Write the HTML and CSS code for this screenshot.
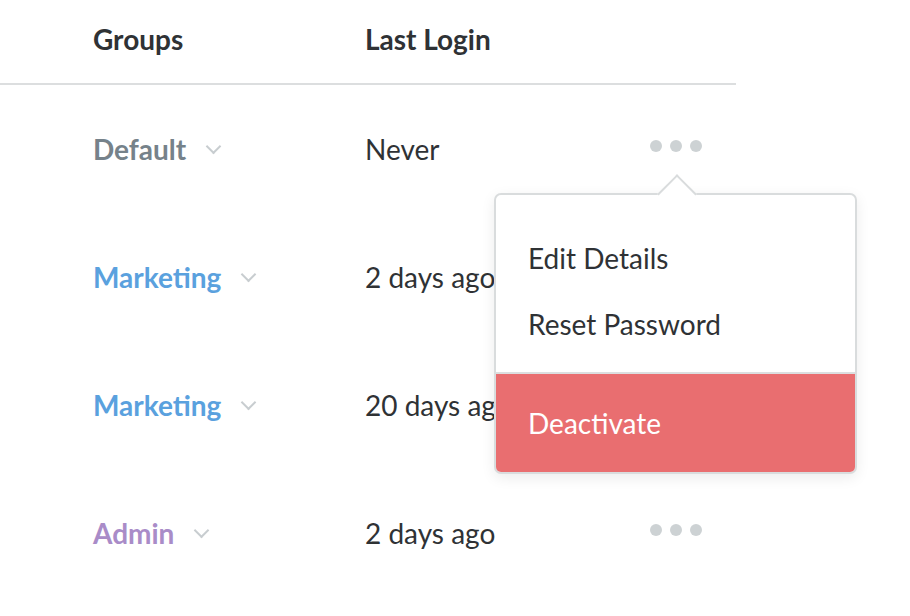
FILE: index.html
```html
<!DOCTYPE html>
<html lang="en">
<head>
  <meta charset="UTF-8">
  <title>Users</title>
  <meta name="viewport" content="width=device-width, initial-scale=1">
  <link rel="stylesheet" href="styles.css">
</head>
<body>

  <div class="users">
    <!-- header -->
    <div class="row head">
      <div class="col-group">Groups</div>
      <div class="col-login">Last Login</div>
      <div class="col-actions"></div>
    </div>

    <div class="row">
      <div class="col-group"><span class="group default">Default</span><span class="chev"></span></div>
      <div class="col-login">Never</div>
      <div class="col-actions">
        <span class="dots"><i></i><i></i><i></i></span>
        <div class="menu">
          <a class="menu-item">Edit Details</a>
          <a class="menu-item">Reset Password</a>
          <a class="menu-item danger">Deactivate</a>
        </div>
      </div>
    </div>

    <div class="row">
      <div class="col-group"><span class="group marketing">Marketing</span><span class="chev"></span></div>
      <div class="col-login">2 days ago</div>
      <div class="col-actions"><span class="dots"><i></i><i></i><i></i></span></div>
    </div>

    <div class="row">
      <div class="col-group"><span class="group marketing">Marketing</span><span class="chev"></span></div>
      <div class="col-login">20 days ago</div>
      <div class="col-actions"><span class="dots"><i></i><i></i><i></i></span></div>
    </div>

    <div class="row">
      <div class="col-group"><span class="group admin">Admin</span><span class="chev"></span></div>
      <div class="col-login">2 days ago</div>
      <div class="col-actions"><span class="dots"><i></i><i></i><i></i></span></div>
    </div>
  </div>

</body>
</html>
```

FILE: styles.css
```css
body { margin: 0; background: #fff; font-family: Lato, "Noto Sans", sans-serif; color: #2f3235; overflow: hidden; }

/* table */
.users { width: 736px; }
.row { display: grid; grid-template-columns: 272px 285px 1fr; padding-left: 93px; height: 128px; align-items: center; font-size: 28px; }
.row.head { height: 83px; border-bottom: 2px solid #dcdedf; font-weight: 700; align-items: start; }
.row.head > div { padding-top: 22px; }

.col-group { display: flex; align-items: center; }
.group { font-weight: 700; }
.group.default { color: #76828a; }
.group.marketing { color: #5aa1de; }
.group.admin { color: #a98cc8; }
.chev { width: 9px; height: 9px; border-right: 2px solid #c8cdd0; border-bottom: 2px solid #c8cdd0; transform: rotate(45deg); margin: -6px 0 0 22px; }

.col-login { color: #2f3235; }

/* actions */
.col-actions { position: relative; }
.dots { display: flex; gap: 8px; margin-top: -6px; }
.dots i { width: 12px; height: 12px; border-radius: 50%; background: #cdd2d4; }

/* dropdown */
.menu {
  position: absolute; left: -156px; top: 47px; width: 359px;
  border: 2px solid #d9dcdd; border-radius: 7px; background: #fff;
  box-shadow: 0 4px 14px rgba(0,0,0,0.08);
  padding-top: 30px; z-index: 2;
}
.menu::before {
  content: ""; position: absolute; left: 167px; top: -15px; width: 26px; height: 26px;
  background: #fff; border-left: 2px solid #d9dcdd; border-top: 2px solid #d9dcdd;
  transform: rotate(45deg);
}
.menu-item { display: block; padding: 0 32px; height: 66px; line-height: 66px; color: #2f3235; font-size: 28px; position: relative; }
.menu-item.danger { margin-top: 15px; border-top: 2px solid #dcdedf; height: 98px; line-height: 98px; background: #e96e70; color: #fff; border-radius: 0 0 5px 5px; }
```
